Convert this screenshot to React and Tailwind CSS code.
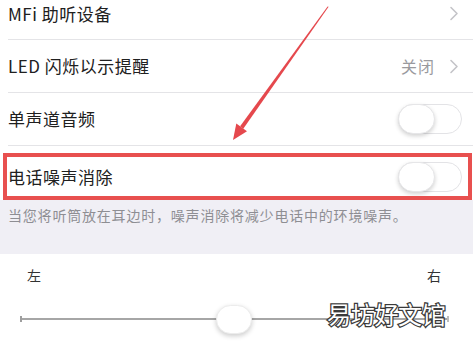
import React from "react";

const font = { fontFamily: '"Noto Sans CJK SC", "Noto Sans", sans-serif' };

function Chevron() {
  return (
    <svg width="10" height="15" viewBox="0 0 10 15" className="block">
      <path d="M2 1.5 L8 7.5 L2 13.5" fill="none" stroke="#c4c4c8" strokeWidth="1.6" strokeLinecap="round" strokeLinejoin="round" />
    </svg>
  );
}

function Toggle() {
  return (
    <div className="relative w-[64px] h-[30px] rounded-full border border-[#e3e3e6] bg-white">
      <div className="absolute left-[-1px] top-[-1px] w-[37px] h-[30px] rounded-full bg-white border border-[#e6e6e8] shadow-[0_2px_4px_rgba(0,0,0,0.18)]" />
    </div>
  );
}

function Row({ children, right, className = "" }) {
  return (
    <div className={"ml-2 flex items-center justify-between border-b border-[#e4e4e7] pr-[11px] " + className}>
      <span className="text-[17px] text-[#202020] tracking-[0.5px]">{children}</span>
      {right}
    </div>
  );
}

export default function App() {
  return (
    <div className="relative w-[473px] h-[345px] overflow-hidden bg-white" style={font}>
      <div className="bg-white">
        <Row className="h-[52px] -mt-[12px]" right={<div className="pr-[3px]"><Chevron /></div>}>MFi 助听设备</Row>
        <Row
          className="h-[53px]"
          right={
            <div className="flex items-center gap-[14px] pr-[3px]">
              <span className="text-[16px] text-[#9a9a9e] tracking-[1px]">关闭</span>
              <Chevron />
            </div>
          }
        >
          LED 闪烁以示提醒
        </Row>
        <Row className="h-[53px]" right={<Toggle />}>单声道音频</Row>
        <div className="relative h-[54px] pl-2 pr-[11px] flex items-center justify-between pt-[7px]">
          <span className="text-[17px] text-[#202020] tracking-[0.5px]">电话噪声消除</span>
          <Toggle />
          <div className="absolute left-[3px] right-[1px] top-[7px] bottom-0 border-[4.5px] border-[#e8504f]" />
        </div>
      </div>
      <div className="bg-[#f0eff5] h-[54px] pl-2 pt-[5px]">
        <p className="text-[14px] text-[#8e8e93] tracking-[0.8px] leading-[20px]">当您将听筒放在耳边时，噪声消除将减少电话中的环境噪声。</p>
      </div>
      <div className="bg-white pt-[12px]">
        <div className="flex justify-between px-[27px] pr-[32px] text-[14px] text-[#333] leading-[18px]">
          <span>左</span>
          <span>右</span>
        </div>
        <div className="relative mt-[21px] mx-[20px] mr-[24px] h-[28px] flex items-center">
          <div className="w-[2px] h-[6px] bg-[#9e9e9e]" />
          <div className="flex-1 h-[2px] bg-[#a6a6a6]" />
          <div className="w-[2px] h-[6px] bg-[#bdbdbd]" />
          <div className="absolute left-[196px] top-[0px] w-[36px] h-[29px] rounded-full bg-white border border-[#ececec] shadow-[0_2px_5px_rgba(0,0,0,0.2)]" />
        </div>
      </div>
      <div
        className="absolute left-[327px] top-[299px] text-[24px] leading-[30px] text-white tracking-[-0.3px] [paint-order:stroke_fill] [-webkit-text-stroke:2.5px_#3a3a3a]"
        style={{ fontFamily: '"Noto Sans CJK SC", sans-serif' }}
      >
        易坊好文馆
      </div>
      <svg className="absolute left-0 top-0 pointer-events-none" width="473" height="345" viewBox="0 0 473 345">
        <polygon points="328.6,6.8 327.6,6.6 240.1,126.2 243.3,128.8" fill="#e5484d" />
        <polygon points="233,140 236.3,123.6 247,131.2" fill="#e5484d" />
      </svg>
    </div>
  );
}
